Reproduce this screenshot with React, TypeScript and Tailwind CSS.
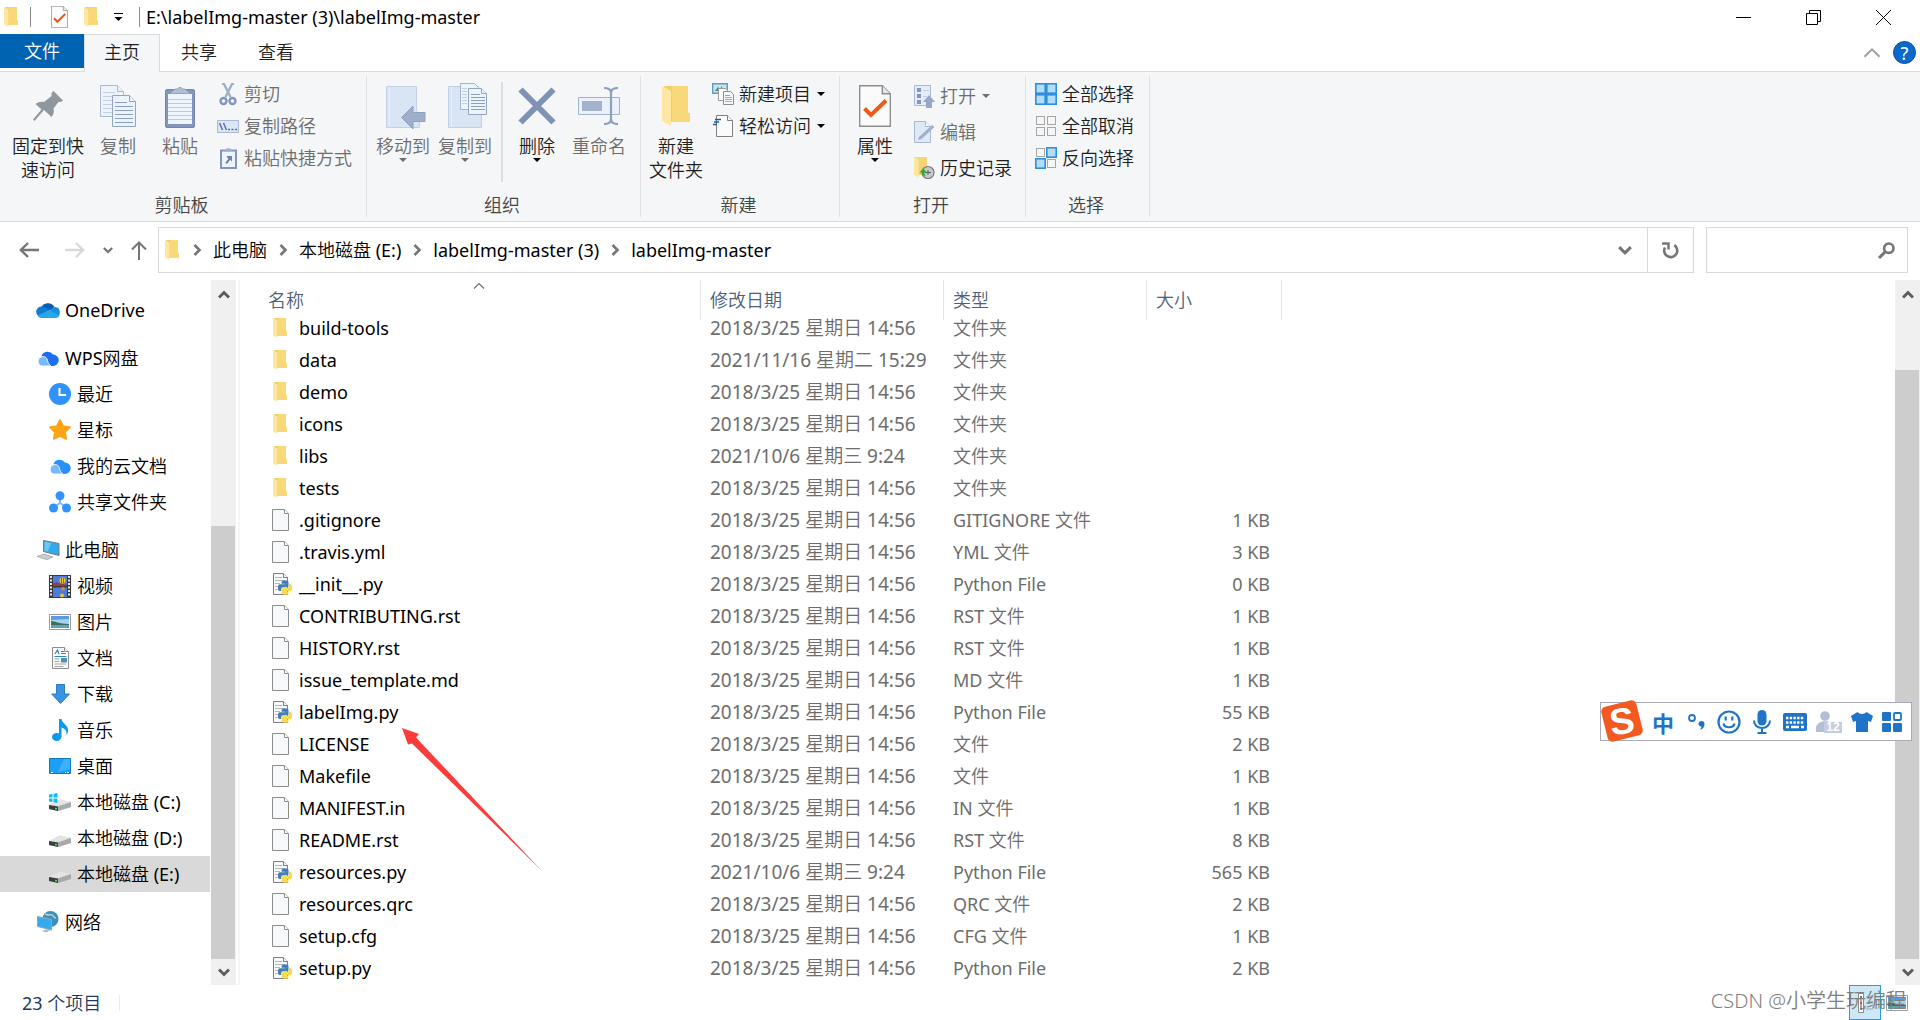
import { useState } from "react";
import type { ReactNode } from "react";
import clsx from "clsx";

type FileKind = "folder" | "file" | "python";

interface FileRow {
    name: string;
    kind: FileKind;
    date: string;
    type: string;
    size?: string;
}

const MARCH = "2018/3/25 星期日 14:56";
const OCTOBER = "2021/10/6 星期三 9:24";

const files: FileRow[] = [
    { name: "build-tools", kind: "folder", date: MARCH, type: "文件夹" },
    { name: "data", kind: "folder", date: "2021/11/16 星期二 15:29", type: "文件夹" },
    { name: "demo", kind: "folder", date: MARCH, type: "文件夹" },
    { name: "icons", kind: "folder", date: MARCH, type: "文件夹" },
    { name: "libs", kind: "folder", date: OCTOBER, type: "文件夹" },
    { name: "tests", kind: "folder", date: MARCH, type: "文件夹" },
    { name: ".gitignore", kind: "file", date: MARCH, type: "GITIGNORE 文件", size: "1 KB" },
    { name: ".travis.yml", kind: "file", date: MARCH, type: "YML 文件", size: "3 KB" },
    { name: "__init__.py", kind: "python", date: MARCH, type: "Python File", size: "0 KB" },
    { name: "CONTRIBUTING.rst", kind: "file", date: MARCH, type: "RST 文件", size: "1 KB" },
    { name: "HISTORY.rst", kind: "file", date: MARCH, type: "RST 文件", size: "1 KB" },
    { name: "issue_template.md", kind: "file", date: MARCH, type: "MD 文件", size: "1 KB" },
    { name: "labelImg.py", kind: "python", date: MARCH, type: "Python File", size: "55 KB" },
    { name: "LICENSE", kind: "file", date: MARCH, type: "文件", size: "2 KB" },
    { name: "Makefile", kind: "file", date: MARCH, type: "文件", size: "1 KB" },
    { name: "MANIFEST.in", kind: "file", date: MARCH, type: "IN 文件", size: "1 KB" },
    { name: "README.rst", kind: "file", date: MARCH, type: "RST 文件", size: "8 KB" },
    { name: "resources.py", kind: "python", date: OCTOBER, type: "Python File", size: "565 KB" },
    { name: "resources.qrc", kind: "file", date: MARCH, type: "QRC 文件", size: "2 KB" },
    { name: "setup.cfg", kind: "file", date: MARCH, type: "CFG 文件", size: "1 KB" },
    { name: "setup.py", kind: "python", date: MARCH, type: "Python File", size: "2 KB" },
];

/* ---------- file icons ---------- */

function FolderIcon({ className = "w-[14px] h-5" }: { className?: string }) {
    return (
        <svg viewBox="0 0 14 20" preserveAspectRatio="none" className={className}>
            <path d="M1 0h12v13.5h1V18H4z" fill="#f3cd6c" />
            <path d="M5 0h8v13.5h1V18H5z" fill="#f8d878" />
            <path d="M0 0l4.5 2.5V20L0 17.5z" fill="#ffe7a2" />
        </svg>
    );
}

function PageIcon() {
    return (
        <svg viewBox="0 0 17 22" className="w-[17px] h-[22px]">
            <path d="M.5.5h12l4 4v17H.5z" fill="#f8f9fa" stroke="#8c8c8c" />
            <path d="M12.5.5v4h4" fill="#fff" stroke="#8c8c8c" />
        </svg>
    );
}

function PythonIcon() {
    return (
        <svg viewBox="0 0 20 22" className="w-5 h-[22px]">
            <path d="M1.5.5h10l4 4v17h-14z" fill="#f8f9fa" stroke="#7d7d7d" />
            <path d="M11.5.5v4h4" fill="#fff" stroke="#7d7d7d" />
            <path d="M3 4.5h7M3 7.5h10M3 10.5h5M3 13.5h3M3 16.5h4" stroke="#b5b5b5" />
            <g transform="translate(6 7.5) scale(.59)">
                <path fill="#3d7fb8" d="M14.25.18l.9.2.73.26.59.3.45.32.34.34.25.34.16.33.1.3.04.26.02.2-.01.13V8.5l-.05.63-.13.55-.21.46-.26.38-.3.31-.33.25-.35.19-.35.14-.33.1-.3.07-.26.04-.21.02H8.77l-.69.05-.59.14-.5.22-.41.27-.33.32-.27.35-.2.36-.15.37-.1.35-.07.32-.04.27-.02.21v3.06H3.17l-.21-.03-.28-.07-.32-.12-.35-.18-.36-.26-.36-.36-.35-.46-.32-.59-.28-.73-.21-.88-.14-1.05-.05-1.23.06-1.22.16-1.04.24-.87.32-.71.36-.57.4-.44.42-.33.42-.24.4-.16.36-.1.32-.05.24-.01h.16l.06.01h8.16v-.83H6.18l-.01-2.75-.02-.37.05-.34.11-.31.17-.28.25-.26.31-.23.38-.2.44-.18.51-.15.58-.12.64-.1.71-.06.77-.04.84-.02 1.27.05z" />
                <path fill="#ffd84a" d="M21.1 6.11l.28.06.32.12.35.18.36.27.36.35.35.47.32.59.28.73.21.88.14 1.04.05 1.23-.06 1.23-.16 1.04-.24.86-.32.71-.36.57-.4.45-.42.33-.42.24-.4.16-.36.09-.32.05-.24.02-.16-.01h-8.22v.82h5.84l.01 2.76.02.36-.05.34-.11.31-.17.29-.25.25-.31.24-.38.2-.44.17-.51.15-.58.13-.64.09-.71.07-.77.04-.84.01-1.27-.04-1.07-.14-.9-.2-.73-.25-.59-.3-.45-.33-.34-.34-.25-.34-.16-.33-.1-.3-.04-.25-.02-.2.01-.13v-5.34l.05-.64.13-.54.21-.46.26-.38.3-.32.33-.24.35-.2.35-.14.33-.1.3-.06.26-.04.21-.02.13-.01h5.84l.69-.05.59-.14.5-.21.41-.28.33-.32.27-.35.2-.36.15-.36.1-.35.07-.32.04-.28.02-.21V6.07h2.09z" />
            </g>
        </svg>
    );
}

function CheckPageIcon({ className }: { className: string }) {
    return (
        <svg viewBox="0 0 32 42" className={className}>
            <path d="M.7.7h22.6l8 8v32.6H.7z" fill="#fbfbfb" stroke="#8e8e8e" strokeWidth="1.4" />
            <path d="M23.3.7v8h8" fill="#e6e6e6" stroke="#8e8e8e" strokeWidth="1.4" />
            <path d="M5.5 23.5l6.5 6.5L27 15.5" fill="none" stroke="#f1581a" strokeWidth="4" />
        </svg>
    );
}

const fileIcons: Record<FileKind, ReactNode> = {
    folder: <span className="pl-px"><FolderIcon /></span>,
    file: <PageIcon />,
    python: <PythonIcon />,
};

/* ---------- small glyphs ---------- */

function Caret({ muted = false }: { muted?: boolean }) {
    return (
        <svg viewBox="0 0 8 4" className="w-2 h-1">
            <path d="M0 0h8L4 4z" fill={muted ? "#6d6d6d" : "#000"} />
        </svg>
    );
}

function Chevron({ dir, className = "w-3 h-3", color = "#5d5d5d", weight = 2.6 }: { dir: "up" | "down" | "right"; className?: string; color?: string; weight?: number }) {
    const paths = { up: "M1 8.5L6 3.5l5 5", down: "M1 3.5l5 5 5-5", right: "M3.5 1l5 5-5 5" };
    return (
        <svg viewBox="0 0 12 12" className={className}>
            <path d={paths[dir]} fill="none" stroke={color} strokeWidth={weight} />
        </svg>
    );
}

/* ---------- ribbon icons ---------- */

const PinIcon = (
    <svg viewBox="0 0 30 30" className="w-[30px] h-[30px]">
        <path d="M20.5 0L30 9.500l-2.500 1.500-2 0-5 6.500c.8 3 .2 6-2 8.500L11 19 1.500 30 0 28.500 8.500 18.500 2.500 13c2.500-2 5.500-2.500 8.500-2L18.500 5V2z" fill="#8f989e" />
    </svg>
);

function SheetPair({ className }: { className: string }) {
    return (
        <svg viewBox="0 0 36 42" className={className}>
            <g fill="#edf3fb" stroke="#a9b9d3">
                <path d="M.5.500h17l6 6v25H.5z" />
                <path d="M17.500.500v6h6" />
                <path d="M12.500 10.500h17l6 6v25h-23z" stroke="#93a5c4" />
                <path d="M29.500 10.500v6h6" stroke="#93a5c4" />
            </g>
            <path d="M3 7.500h12M3 11.500h9M3 15.500h9M3 19.500h9M3 23.500h9M3 27.500h9" stroke="#c3cfe2" />
            <path d="M15 17.500h12M15 21.500h18M15 25.500h18M15 29.500h18M15 33.500h18M15 37.500h18" stroke="#8c9fc0" />
        </svg>
    );
}

const PasteIcon = (
    <svg viewBox="0 0 30 43" className="w-[30px] h-[43px]">
        <rect x=".5" y="4.500" width="29" height="38" rx="1.500" fill="#8395bb" stroke="#7386ae" />
        <path d="M3 9h24v30H3z" fill="#eef4fc" />
        <path d="M3 14.500h24M3 18.500h24M3 22.500h24M3 26.500h24M3 30.500h24M3 34.500h24" stroke="#bccbe2" />
        <path d="M5 8.500l5-4.500h2.500a2.800 2.800 0 015 0H20l5 4.500z" fill="#b1bfd6" stroke="#93a4c2" />
    </svg>
);

const CutIcon = (
    <svg viewBox="0 0 18 23" className="w-[18px] h-[23px]" fill="none">
        <path d="M3 .5l2 .5 6.500 13M15 .5l-2 .5-6.500 13" stroke="#9eafcb" strokeWidth="2.400" />
        <circle cx="4.500" cy="18" r="3" stroke="#8196bd" strokeWidth="2.400" />
        <circle cx="13.500" cy="18" r="3" stroke="#8196bd" strokeWidth="2.400" />
    </svg>
);

const CopyPathIcon = (
    <svg viewBox="0 0 22 13" className="w-[22px] h-[13px]">
        <path d="M.5.500h21v12H.5z" fill="#dce6f4" stroke="#a9b9d3" />
        <path d="M2.500 3l3 7M6.500 3l3 7M11 9.500h2M14.500 9.500h2M18 9.500h2" stroke="#5c709b" strokeWidth="1.500" />
    </svg>
);

const PasteLinkIcon = (
    <svg viewBox="0 0 17 22" className="w-[17px] h-[22px]">
        <rect x="1" y="3.500" width="15" height="17.500" fill="#edf3fb" stroke="#8395bb" strokeWidth="2" />
        <path d="M3.500 4.500l3-3h1a1.300 1.300 0 012 0h1l3 3z" fill="#a2b2ce" />
        <path d="M6.500 9H12v5.500l-1.800-1.700L7 17l-1.700-1.200 3-3.800z" fill="#6f83ac" />
    </svg>
);

function LightFolder({ children }: { children: ReactNode }) {
    return (
        <svg viewBox="0 0 42 46" className="ml-1.5 w-[42px] h-[46px]">
            <path d="M1.500 3.500h30v24l3 3v14h-33z" fill="#d9e4f4" stroke="#c1d0e6" />
            <path d="M4.500 4v40" stroke="#e8effa" />
            {children}
        </svg>
    );
}

const MoveIcon = (
    <LightFolder>
        <path d="M16.500 34.500L28 23v6.500h12v9H28V46z" fill="#9fafcb" stroke="#8fa1c2" />
    </LightFolder>
);

const CopyToIcon = (
    <LightFolder>
        <g fill="#edf3fb" stroke="#a3b4cf">
            <path d="M13.500.500h14l4 4v22h-18z" />
            <path d="M21.500 5.500h13l5 5v21h-18z" stroke="#93a5c4" />
            <path d="M34.500 5.500v5h5" stroke="#93a5c4" />
        </g>
        <path d="M15 5.500h5M15 8.500h5M15 11.500h5M15 14.500h5M15 17.500h5M15 20.500h5" stroke="#c3cfe2" />
        <path d="M24 11.500h9M24 14.500h14M24 17.500h14M24 20.500h14M24 23.500h14M24 26.500h14" stroke="#8c9fc0" />
    </LightFolder>
);

const DeleteIcon = (
    <svg viewBox="0 0 38 38" className="w-[38px] h-[38px]">
        <path d="M2.500 2.500l33 33M35.500 2.500l-33 33" stroke="#8092b3" strokeWidth="6" />
    </svg>
);

const RenameIcon = (
    <svg viewBox="0 0 42 38" className="w-[42px] h-[38px]" fill="none">
        <path d="M.5 10.500h41v17H.5z" fill="#eaf1fa" stroke="#a1b2cf" />
        <path d="M4 14h20v10H4z" fill="#a3b2cd" />
        <path d="M26 1c4 0 7 1.500 7 5v26c0 3.500-3 5-7 5M40 1c-4 0-7 1.500-7 5M40 37c-4 0-7-1.500-7-5" stroke="#8c9fc0" strokeWidth="2.200" />
    </svg>
);

const NewItemIcon = (
    <svg viewBox="0 0 22 22" className="w-[22px] h-[22px]">
        <path d="M.7.700h14.600v9.600H.700z" fill="#c4e4f4" stroke="#5e9fc0" strokeWidth="1.400" />
        <path d="M3 8l3-4 2 2 2-3v5z" fill="#4b7f95" />
        <path d="M6.500 5.500h7l2 2v10h-9z" fill="#fff" stroke="#9b9b9b" />
        <path d="M11.500 8.500h7l3 3v10h-10z" fill="#f4f8fd" stroke="#8e8e8e" />
        <path d="M13 12.500h5M13 16.500h7" stroke="#e08a84" />
        <path d="M13 14.500h7M13 18.500h7" stroke="#86b7e2" />
    </svg>
);

const EasyAccessIcon = (
    <svg viewBox="0 0 20 22" className="w-5 h-[22px]">
        <path d="M3.500.500h11l5 5v16h-16z" fill="#fbfbfb" stroke="#808080" />
        <path d="M14.500.500v5h5" fill="#fff" stroke="#808080" />
        <path d="M2 4.500h6M1 7h5M0 9.500h4" stroke="#1d5c9e" strokeWidth="1.300" />
    </svg>
);

const OpenIcon = (
    <svg viewBox="0 0 21 23" className="w-[21px] h-[23px]">
        <path d="M.5.500h16v20H.5z" fill="#e4ecf7" stroke="#a9b9d3" />
        <path d="M3 3h4v4H3zM3 9h4v4H3zM3 15h4v4H3z" fill="#8396bb" />
        <path d="M9 5.500h6M9 11.500h4" stroke="#c3cfe2" />
        <path d="M15 10l6 7h-3v6h-6v-6H9z" fill="#97a8c7" />
    </svg>
);

const EditIcon = (
    <svg viewBox="0 0 21 22" className="w-[21px] h-[22px]">
        <path d="M.5.500h11l5 5v16H.5z" fill="#dfe8f5" stroke="#a9b9d3" />
        <path d="M11.500.500v5h5" fill="#f3f7fc" stroke="#a9b9d3" />
        <path d="M4 19l1-3L18 4l2.500 2L7.500 18z" fill="#9fb0cd" />
    </svg>
);

const HistoryIcon = (
    <svg viewBox="0 0 21 22" className="w-[21px] h-[22px]">
        <path d="M0 0h13v18H4z" fill="#f6d374" />
        <path d="M0 0l4.500 2.500V21L0 18z" fill="#ffe7a2" />
        <circle cx="14" cy="15.500" r="6" fill="#c7cacb" stroke="#77797a" strokeWidth="1.200" />
        <path d="M11 15.500h6M14 13v5" stroke="#5d6061" />
        <path d="M5.500 15.500l3.500-4 3.500 3.500h-2c0 2 .5 3 1.500 4-3 0-4-1.500-4.300-3.500z" fill="#2fae34" />
    </svg>
);

function SelectIcon({ on }: { on: boolean[] }) {
    return (
        <svg viewBox="0 0 22 22" className="w-[22px] h-[22px]">
            {on.map((lit, i) => (
                <rect
                    key={i}
                    x={lit ? (i % 2) * 11 + 0.8 : (i % 2) * 11 + 1.5}
                    y={lit ? (i > 1 ? 11.8 : 0.8) : i > 1 ? 12.5 : 1.5}
                    width={lit ? 9.4 : 8}
                    height={lit ? 9.4 : 8}
                    fill={lit ? "#b4dcfb" : "#f6f6f6"}
                    stroke={lit ? "#2d8fe0" : "#a6a6a6"}
                    strokeWidth={lit ? 1.6 : 1}
                />
            ))}
        </svg>
    );
}

/* ---------- sidebar icons ---------- */

const OneDriveIcon = (
    <svg viewBox="0 0 24 16" className="w-6 h-4">
        <path d="M5 6a7.500 7.500 0 0113.500-1L12 10z" fill="#0a5cb0" />
        <path d="M6 4.500c3 0 5 1.500 8 3.500L5 15a5.200 5.200 0 011-10.500z" fill="#1079d3" />
        <path d="M14 8c3-3.500 6-3.500 7-2.500 3 .5 3.500 6 2 8l-6-1z" fill="#1490df" />
        <path d="M1.500 13.500L13.500 8l10 5.500c-1 1.700-2 2.500-4 2.500H5c-1.500 0-2.800-1-3.500-2.500z" fill="#28a8ea" />
    </svg>
);

function CloudIcon({ deep = false }: { deep?: boolean }) {
    return (
        <svg viewBox="0 0 22 16" className="w-[22px] h-4">
            <path d="M4.500 6A6.500 6.500 0 0116 4.500a5.700 5.700 0 010 11.500h-4z" fill={deep ? "#1d6ff2" : "#2a90fa"} />
            <path d="M5.500 6.500a5 5 0 015 4c.5 2.500 1.500 4 3.500 5.500H5A4.800 4.800 0 015.500 6.500z" fill="#78b8fd" stroke="#fff" strokeWidth=".9" />
        </svg>
    );
}

const RecentIcon = (
    <svg viewBox="0 0 22 22" className="w-[22px] h-[22px]">
        <circle cx="11" cy="11" r="11" fill="#2f93fb" />
        <path d="M10.500 5v7H17" fill="none" stroke="#fff" strokeWidth="2" />
    </svg>
);

const StarIcon = (
    <svg viewBox="0 0 22 22" className="w-[22px] h-[22px]">
        <path d="M11 1.200l3 6 6.800 1-4.900 4.800 1.200 6.800L11 16.800l-6.100 3 1.200-6.800L1.200 8.200l6.800-1z" fill="#fba617" stroke="#fba617" strokeWidth="2" strokeLinejoin="round" />
    </svg>
);

const ShareIcon = (
    <svg viewBox="0 0 22 22" className="w-[22px] h-[22px]">
        <path d="M11 6v6M11 12l-6 4M11 12l6 4" stroke="#7dbafc" strokeWidth="2" />
        <circle cx="11" cy="4.800" r="4.500" fill="#2f93fb" />
        <circle cx="4.500" cy="17" r="4.500" fill="#2f93fb" />
        <circle cx="17.500" cy="17" r="4.500" fill="#2f93fb" />
    </svg>
);

const PcIcon = (
    <svg viewBox="0 0 24 20" className="w-6 h-5">
        <path d="M7.500.500l15.500 3v12L7.500 11.500z" fill="#34a9ec" stroke="#6b7c88" />
        <path d="M8.500 1.700l7 1.300-4 8.500-3-.8z" fill="#6cc5f5" />
        <path d="M1 16.500l7-2.500 9 3-6 2.800z" fill="#c9ccd0" stroke="#9ea3a8" strokeWidth=".7" />
    </svg>
);

const VideoIcon = (
    <svg viewBox="0 0 22 23" className="w-[22px] h-[23px]">
        <path d="M0 0h22v23H0z" fill="#3a3a3a" />
        <path d="M4 1h14v10H4zM4 12.500h14V22H4z" fill="#4f7cdb" />
        <path d="M4 8.500l4-1.500 2 1.500 8 1V11H4z" fill="#8d3f4a" />
        <circle cx="13.500" cy="5.500" r="3" fill="#f0c22e" />
        <path d="M12.500 3v5M14.500 3v5" stroke="#d2402a" />
        <circle cx="14" cy="13.800" r="1.800" fill="#e5862a" />
        <circle cx="13" cy="20.500" r="2" fill="#f0c22e" />
        <path d="M2 1v21M20 1v21" stroke="#e8e8e8" strokeWidth="2" strokeDasharray="2 1.500" />
    </svg>
);

function PictureIcon() {
    return (
        <svg viewBox="0 0 22 16" className="w-[22px] h-4">
            <path d="M.5.500h21v15H.5z" fill="#fff" stroke="#9a9a9a" />
            <path d="M2 2h18v12H2z" fill="#a3d3f3" />
            <path d="M2 2h18v3l-18 1z" fill="#5d9be0" />
            <path d="M2 7c4 0 8 3 18 3v1.500H2z" fill="#3f6d58" />
            <path d="M2 11.500h18V14H2z" fill="#5ea3c4" />
        </svg>
    );
}

const DocumentIcon = (
    <svg viewBox="0 0 17 22" className="w-[17px] h-[22px]">
        <path d="M.5.500h12l4 4v17H.5z" fill="#fbfbfb" stroke="#8c8c8c" />
        <path d="M12.500.500v4h4" fill="#fff" stroke="#8c8c8c" />
        <path d="M3 7l2.500-4L7 7M9 4.500h3M9 6.500h5M2.500 9.500h12" stroke="#2a87c8" fill="none" strokeWidth="1.200" />
        <path d="M2.500 12h5M2.500 14.500h5M2.500 17h12M2.500 19.500h9" stroke="#a5a5a5" />
        <path d="M9 11h6v4.500H9z" fill="#4f8fb8" />
    </svg>
);

const DownloadIcon = (
    <svg viewBox="0 0 19 20" className="w-[19px] h-5">
        <path d="M5.500.500h8v9.500h5L9.500 19.500.700 10h4.800z" fill="#3a92e2" stroke="#2a7cc6" />
    </svg>
);

const MusicIcon = (
    <svg viewBox="0 0 16 22" className="w-4 h-[22px]">
        <ellipse cx="4.700" cy="18" rx="4.700" ry="4" fill="#0d99e8" />
        <path d="M7 0h2.500c.5 4 6.500 6 6.500 11 0 2-.5 3.500-1.500 5 .3-5-2-6.500-5-7.500V18H7z" fill="#0d99e8" />
    </svg>
);

const DesktopIcon = (
    <svg viewBox="0 0 22 16" className="w-[22px] h-4">
        <path d="M.5.500h21v15H.5z" fill="#1ba0f8" stroke="#0f78c2" />
        <path d="M15 1h6v10L9 14z" fill="#3eb0fb" />
        <path d="M2 14.500h2M16 14.500h1M18 14.500h2" stroke="#fff" />
    </svg>
);

function DriveIcon({ system = false }: { system?: boolean }) {
    return (
        <svg viewBox="0 0 22 18" className="w-[22px] h-[18px]">
            <path d="M0 12l11-5.500L22 9v5l-13 4-9-2z" fill="#d4d4d6" />
            <path d="M0 12l11-5.500L22 9 9 13z" fill="#e4e4e6" />
            <path d="M0 12l9 1.500V18l-9-2z" fill="#3d3d3d" />
            <path d="M6 15.500l2 .3" stroke="#4be06a" strokeWidth="1.500" />
            <path d="M9 13.500L22 9v5L9 18z" fill="#a9a9ab" />
            {system && <path d="M0 1.500l3.500-.5v3.500H0zM4.500.800L8.500 0v4.500h-4zM0 5.500h3.500V9L0 8.500zM4.500 5.500h4V10l-4-.8z" fill="#10bdf2" />}
        </svg>
    );
}

const NetworkIcon = (
    <svg viewBox="0 0 22 22" className="w-[22px] h-[22px]">
        <circle cx="13.500" cy="8" r="8" fill="#3f8fb8" />
        <path d="M8 3c3 2 5 0 7 1s2 3 4 3" stroke="#a8d0e0" strokeWidth="1.600" fill="none" />
        <path d="M.5 5.500l14 3v10.500L.5 15.500z" fill="#35abee" stroke="#8aa9b8" />
        <path d="M5 20l5-2 3 1.500L9 21.500z" fill="#b5b9bd" />
    </svg>
);

/* ---------- ribbon ---------- */

interface ButtonProps {
    icon: ReactNode;
    label: string;
    muted?: boolean;
    caret?: boolean;
}

function BigButton({ icon, label, muted, caret, className }: ButtonProps & { className: string }) {
    return (
        <button className={clsx("flex shrink-0 flex-col items-center pt-[11px]", muted ? "text-[#6d6d6d]" : "text-[#1e1e1e]", className)}>
            <span className="flex h-[46px] items-center justify-center">{icon}</span>
            <span className="mt-[5px] whitespace-pre-line text-center leading-6">{label}</span>
            {caret && <Caret muted={muted} />}
        </button>
    );
}

function SmallButton({ icon, label, muted, caret, tall }: ButtonProps & { tall?: boolean }) {
    return (
        <button className={clsx("flex items-center whitespace-nowrap", tall ? "h-9" : "h-8", muted ? "text-[#6d6d6d]" : "text-[#1e1e1e]")}>
            <span className="mr-1 flex w-6 justify-center">{icon}</span>
            {label}
            {caret && <span className="flex pl-1.5"><Caret muted={muted} /></span>}
        </button>
    );
}

function RibbonGroup({ title, className, children }: { title: string; className: string; children: ReactNode }) {
    return (
        <section className={clsx("relative flex h-full shrink-0 flex-col", className)}>
            <div className="flex flex-1">{children}</div>
            <h2 className="h-8 pr-1 text-center leading-8 text-[#444]">{title}</h2>
            <span className="absolute right-0 top-1 bottom-1 w-px bg-[#dfe1e3]" />
        </section>
    );
}

function Ribbon() {
    return (
        <div className="flex h-[150px] overflow-hidden border-b border-[#dadbdc] bg-[#f4f6f8]">
            <RibbonGroup title="剪贴板" className="w-[367px]">
                <BigButton className="ml-2 w-20" icon={PinIcon} label={"固定到快\n速访问"} />
                <BigButton className="w-[60px]" icon={<SheetPair className="w-9 h-[42px]" />} label="复制" muted />
                <BigButton className="w-16" icon={PasteIcon} label="粘贴" muted />
                <div className="ml-1 pt-1.5">
                    <SmallButton icon={CutIcon} label="剪切" muted />
                    <SmallButton icon={CopyPathIcon} label="复制路径" muted />
                    <SmallButton icon={PasteLinkIcon} label="粘贴快捷方式" muted />
                </div>
            </RibbonGroup>
            <RibbonGroup title="组织" className="w-[274px]">
                <BigButton className="ml-1 w-16" icon={MoveIcon} label="移动到" muted caret />
                <BigButton className="w-[60px]" icon={CopyToIcon} label="复制到" muted caret />
                <span className="mx-1.5 mt-2.5 h-[100px] w-0.5 bg-[#dcdee0]" />
                <BigButton className="w-14" icon={DeleteIcon} label="删除" caret />
                <BigButton className="ml-1 w-[60px]" icon={RenameIcon} label="重命名" muted />
            </RibbonGroup>
            <RibbonGroup title="新建" className="w-[199px]">
                <BigButton className="ml-1 w-[62px]" icon={<FolderIcon className="w-7 h-10" />} label={"新建\n文件夹"} />
                <div className="ml-1 pt-1.5">
                    <SmallButton icon={NewItemIcon} label="新建项目" caret />
                    <SmallButton icon={EasyAccessIcon} label="轻松访问" caret />
                </div>
            </RibbonGroup>
            <RibbonGroup title="打开" className="w-[186px]">
                <BigButton className="ml-1 w-[62px]" icon={<CheckPageIcon className="w-8 h-[42px]" />} label="属性" caret />
                <div className="ml-1.5 pt-1.5">
                    <SmallButton icon={OpenIcon} label="打开" muted caret tall />
                    <SmallButton icon={EditIcon} label="编辑" muted tall />
                    <SmallButton icon={HistoryIcon} label="历史记录" tall />
                </div>
            </RibbonGroup>
            <RibbonGroup title="选择" className="w-[124px]">
                <div className="ml-2 pt-1.5">
                    <SmallButton icon={<SelectIcon on={[true, true, true, true]} />} label="全部选择" />
                    <SmallButton icon={<SelectIcon on={[false, false, false, false]} />} label="全部取消" />
                    <SmallButton icon={<SelectIcon on={[false, true, true, false]} />} label="反向选择" />
                </div>
            </RibbonGroup>
        </div>
    );
}

/* ---------- window chrome ---------- */

function TitleBar() {
    return (
        <header className="flex h-[34px] items-center pl-1 pr-0.5">
            <FolderIcon />
            <span className="ml-3 h-5 w-px bg-[#8c8c8c]" />
            <CheckPageIcon className="ml-5 w-[17px] h-[22px]" />
            <span className="ml-4 flex"><FolderIcon /></span>
            <button aria-label="自定义快速访问工具栏" className="ml-4">
                <svg viewBox="0 0 9 8" className="w-[9px] h-2">
                    <path d="M0 .5h9" stroke="#000" />
                    <path d="M.5 4h8l-4 4z" fill="#000" />
                </svg>
            </button>
            <span className="ml-4 h-5 w-px bg-[#8c8c8c]" />
            <h1 className="ml-1.5 flex-1 text-black">E:\labelImg-master (3)\labelImg-master</h1>
            <button aria-label="最小化" className="flex h-full w-[70px] items-center justify-center">
                <svg viewBox="0 0 15 15" className="w-[15px] h-[15px]"><path d="M0 7.500h15" stroke="#000" /></svg>
            </button>
            <button aria-label="向下还原" className="flex h-full w-[70px] items-center justify-center">
                <svg viewBox="0 0 15 15" className="w-[15px] h-[15px]" fill="none" stroke="#000">
                    <path d="M.5 3.500h11v11H.5zM3.500 3.500v-3h11v11h-3" />
                </svg>
            </button>
            <button aria-label="关闭" className="flex h-full w-[70px] items-center justify-center">
                <svg viewBox="0 0 15 15" className="w-[15px] h-[15px]"><path d="M0 0l15 15M15 0L0 15" stroke="#000" /></svg>
            </button>
        </header>
    );
}

function Tabs() {
    return (
        <nav className="relative flex h-[38px] border-b border-[#dadbdc] text-[#1e1e1e]">
            <button className="h-[34px] w-[84px] bg-[#0063b1] text-white">文件</button>
            <button className="-mb-px w-[76px] border border-b-0 border-[#dadbdc] bg-[#f4f6f8] pb-1">主页</button>
            <button className="w-[78px] pb-0.5">共享</button>
            <button className="w-[76px] pb-0.5">查看</button>
            <div className="ml-auto flex items-center gap-3 pr-1">
                <button aria-label="最小化功能区"><Chevron dir="up" className="w-[18px] h-[18px]" color="#9d9d9d" weight={1.2} /></button>
                <button aria-label="帮助" className="flex h-[23px] w-[23px] items-center justify-center rounded-full border border-[#0b4f94] bg-[#0a6acb] text-lg leading-5 text-white">?</button>
            </div>
        </nav>
    );
}

function AddressBar() {
    const [query, setQuery] = useState("");
    const crumbs = ["此电脑", "本地磁盘 (E:)", "labelImg-master (3)", "labelImg-master"];
    return (
        <div className="flex items-center px-3 pt-[5px]">
            <div className="flex w-[146px] items-center pl-[7px]">
                <button aria-label="返回">
                    <svg viewBox="0 0 20 16" className="w-5 h-4" fill="none" stroke="#757575" strokeWidth="2.400"><path d="M1.500 8H20M9 1L1.800 8 9 15" /></svg>
                </button>
                <button aria-label="前进" className="ml-[26px]">
                    <svg viewBox="0 0 20 16" className="w-5 h-4" fill="none" stroke="#d9d9d9" strokeWidth="2.400"><path d="M0 8h18.500M11 1l7.200 7-7.200 7" /></svg>
                </button>
                <button aria-label="最近浏览的位置" className="ml-[18px]"><Chevron dir="down" className="w-2.5 h-2.5" color="#757575" /></button>
                <button aria-label="上移" className="ml-[18px]">
                    <svg viewBox="0 0 16 19" className="w-4 h-[19px]" fill="none" stroke="#757575" strokeWidth="2"><path d="M8 1.500V19M1 8.500l7-7 7 7" /></svg>
                </button>
            </div>
            <div className="flex h-[46px] min-w-0 flex-1 items-center border border-[#d9d9d9] pl-1.5">
                <span className="mr-0.5"><FolderIcon /></span>
                {crumbs.map((crumb) => (
                    <span key={crumb} className="flex items-center gap-2.5 pl-2.5">
                        <Chevron dir="right" color="#757575" />
                        <button className="whitespace-nowrap text-black">{crumb}</button>
                    </span>
                ))}
                <button aria-label="以前的位置" className="ml-auto mr-[15px]"><Chevron dir="down" className="w-3.5 h-3.5" color="#757575" /></button>
                <button aria-label="刷新" className="flex h-full w-[46px] items-center justify-center border-l border-[#d9d9d9]">
                    <svg viewBox="0 0 17 17" className="w-[17px] h-[17px]" fill="none">
                        <path d="M12.300 3.200A6.500 6.500 0 113 5.500" stroke="#757575" strokeWidth="2.600" />
                        <path d="M0 1.500h6.500v6" stroke="#757575" strokeWidth="2.400" />
                    </svg>
                </button>
            </div>
            <label className="ml-3 flex h-[46px] w-[202px] items-center border border-[#d9d9d9] pr-3">
                <input
                    type="search"
                    aria-label="搜索"
                    value={query}
                    onChange={(e) => setQuery(e.target.value)}
                    className="h-full min-w-0 flex-1 pl-2 outline-none"
                />
                <svg viewBox="0 0 17 17" className="w-[17px] h-[17px]" fill="none" stroke="#757575">
                    <circle cx="10.800" cy="6.200" r="4.700" strokeWidth="2.600" />
                    <path d="M7.500 9.500L1 16" strokeWidth="3" />
                </svg>
            </label>
        </div>
    );
}

/* `spacer` is the height of the free track above the thumb */
function Scrollbar({ spacer }: { spacer: string }) {
    return (
        <div className="flex w-[25px] shrink-0 flex-col bg-[#f0f0f0]">
            <button aria-label="向上滚动" className="flex h-[26px] items-center justify-center pt-1"><Chevron dir="up" weight={3} /></button>
            <div className={clsx("shrink-0", spacer)} />
            <div className="mr-px flex-1 bg-[#cdcdcd]" />
            <button aria-label="向下滚动" className="flex h-[26px] items-center justify-center"><Chevron dir="down" weight={3} /></button>
        </div>
    );
}

/* ---------- sidebar ---------- */

interface NavItem {
    label: string;
    icon: ReactNode;
    active?: boolean;
}

interface NavSection extends NavItem {
    items?: NavItem[];
}

const sections: NavSection[] = [
    { label: "OneDrive", icon: OneDriveIcon },
    {
        label: "WPS网盘",
        icon: <CloudIcon deep />,
        items: [
            { label: "最近", icon: RecentIcon },
            { label: "星标", icon: StarIcon },
            { label: "我的云文档", icon: <CloudIcon /> },
            { label: "共享文件夹", icon: ShareIcon },
        ],
    },
    {
        label: "此电脑",
        icon: PcIcon,
        items: [
            { label: "视频", icon: VideoIcon },
            { label: "图片", icon: <PictureIcon /> },
            { label: "文档", icon: DocumentIcon },
            { label: "下载", icon: DownloadIcon },
            { label: "音乐", icon: MusicIcon },
            { label: "桌面", icon: DesktopIcon },
            { label: "本地磁盘 (C:)", icon: <DriveIcon system /> },
            { label: "本地磁盘 (D:)", icon: <DriveIcon /> },
            { label: "本地磁盘 (E:)", icon: <DriveIcon />, active: true },
        ],
    },
    { label: "网络", icon: NetworkIcon },
];

function NavLink({ item, nested }: { item: NavItem; nested?: boolean }) {
    return (
        <a
            href="#"
            className={clsx("flex h-9 items-center gap-[5px] whitespace-nowrap text-black", nested ? "pl-12" : "pl-9", item.active && "bg-[#d9d9d9]")}
        >
            <span className="flex w-6 justify-center">{item.icon}</span>
            {item.label}
        </a>
    );
}

function Sidebar() {
    return (
        <aside className="flex w-60 shrink-0 border-r-2 border-[#f5f5f5]">
            <nav className="mr-px flex flex-1 flex-col gap-3 pt-3">
                {sections.map((section) => (
                    <div key={section.label}>
                        <NavLink item={section} />
                        {section.items?.map((item) => <NavLink key={item.label} item={item} nested />)}
                    </div>
                ))}
            </nav>
            <div className="mr-0.5 flex">
                <Scrollbar spacer="h-[220px]" />
            </div>
        </aside>
    );
}

/* ---------- file table ---------- */

function HeaderCell({ label, className }: { label: string; className?: string }) {
    return (
        <th scope="col" className={clsx("relative h-8 pt-2 text-left align-top font-normal leading-6 text-[#4c607a]", className)}>
            {label}
            <span className="absolute right-0 top-0 h-10 w-px bg-[#e5e5e5]" />
        </th>
    );
}

function FileTable() {
    return (
        <div className="relative min-w-0 flex-1 overflow-hidden">
            <table className="table-fixed border-collapse">
                <colgroup>
                    <col className="w-[461px]" />
                    <col className="w-[243px]" />
                    <col className="w-[203px]" />
                    <col className="w-[135px]" />
                </colgroup>
                <thead>
                    <tr>
                        <HeaderCell label="名称" className="pl-7" />
                        <HeaderCell label="修改日期" className="pl-[9px]" />
                        <HeaderCell label="类型" className="pl-[9px]" />
                        <HeaderCell label="大小" className="pl-[9px]" />
                    </tr>
                </thead>
                <tbody>
                    {files.map((file) => (
                        <tr key={file.name} className="h-8 whitespace-nowrap text-[#6d6d6d]">
                            <td className="p-0 pl-8 text-black">
                                <a href="#" className="flex h-8 items-center">
                                    <span className="flex w-[27px]">{fileIcons[file.kind]}</span>
                                    {file.name}
                                </a>
                            </td>
                            <td className="p-0 pl-[9px] text-[19px]">{file.date}</td>
                            <td className="p-0 pl-[9px]">{file.type}</td>
                            <td className="p-0 pr-3 text-right">{file.size}</td>
                        </tr>
                    ))}
                </tbody>
            </table>
            {/* sort direction mark over the name column */}
            <span className="absolute left-[233px] top-0 flex"><Chevron dir="up" color="#6d6d6d" weight={1.2} /></span>
            {/* annotation arrow pointing at labelImg.py */}
            <svg viewBox="0 0 142 144" className="absolute left-[161px] top-[448px] w-[142px] h-36">
                <path d="M1 0l17 6-3 3.500L141 143 11 15.500 7 16.500z" fill="#fc3b3b" />
            </svg>
        </div>
    );
}

/* ---------- floating input method bar ---------- */

function ImeBar() {
    return (
        <div className="absolute right-2 top-[702px] flex h-[39px] items-center gap-[9px] border border-[#a9a9b8] bg-white pl-[46px] pr-[9px] text-[#1f74c8]">
            <svg viewBox="0 0 44 44" className="absolute -left-px -top-1 w-11 h-11">
                <rect x="4" y="4" width="36" height="36" rx="5" transform="rotate(-14 22 22)" fill="#f4591f" />
                <text x="22" y="35" textAnchor="middle" transform="rotate(-8 22 22)" fontFamily="Liberation Sans, sans-serif" fontSize="37" fontWeight="700" fill="#fff">S</text>
            </svg>
            <button className="ml-1 w-6 text-[22px] font-bold leading-6 font-['Noto_Sans_CJK_SC',sans-serif]">中</button>
            <button aria-label="标点" className="w-6">
                <svg viewBox="0 0 24 24" className="w-6 h-6">
                    <circle cx="8" cy="8" r="3" fill="none" stroke="currentColor" strokeWidth="1.800" />
                    <path d="M14.500 14a3 3 0 116 0c0 3-1.500 5-4.500 6 1-1.500 1.500-2.500 1.300-3.500-1.600 0-2.800-1-2.800-2.500z" fill="currentColor" />
                </svg>
            </button>
            <button aria-label="表情">
                <svg viewBox="0 0 24 24" className="w-6 h-6" fill="none" stroke="currentColor" strokeWidth="2.200">
                    <circle cx="12" cy="12" r="10.500" />
                    <path d="M6.500 13.500c1 5 10 5 11 0M8.700 6.500v4M15.300 6.500v4" />
                </svg>
            </button>
            <button aria-label="语音">
                <svg viewBox="0 0 24 24" className="w-6 h-6">
                    <rect x="7.500" y="0" width="9" height="15.500" rx="4.500" fill="currentColor" />
                    <path d="M4 10.500c0 10 16 10 16 0M12 18v5M7.500 23h9" fill="none" stroke="currentColor" strokeWidth="2" />
                </svg>
            </button>
            <button aria-label="软键盘">
                <svg viewBox="0 0 24 18" className="w-6 h-[18px]">
                    <rect width="24" height="18" rx="2" fill="currentColor" />
                    <path d="M3 5h18M3 9.500h18" stroke="#fff" strokeWidth="2.600" strokeDasharray="2.400 1.300" />
                    <path d="M3 14h3M8 14h8M18 14h3" stroke="#fff" strokeWidth="2.400" />
                </svg>
            </button>
            <button aria-label="登录">
                <svg viewBox="0 0 26 26" className="w-[26px] h-[26px]">
                    <circle cx="9" cy="7" r="4.800" fill="#b4bfd6" />
                    <path d="M0 19c0-9 18-9 18 0v4H0z" fill="#b4bfd6" />
                    <path d="M8 13h18v11H8z" fill="#c3cce0" />
                    <text x="17" y="22" textAnchor="middle" fontFamily="Liberation Sans, sans-serif" fontSize="12" fontWeight="700" fill="#fff">12</text>
                </svg>
            </button>
            <button aria-label="皮肤">
                <svg viewBox="0 0 22 22" className="w-[22px] h-[22px]">
                    <path d="M6.500 1c2 2.500 7 2.500 9 0L22 5l-2 6-3-1v11H5V10l-3 1-2-6z" fill="currentColor" />
                </svg>
            </button>
            <button aria-label="工具箱">
                <svg viewBox="0 0 20 20" className="w-5 h-5" fill="currentColor">
                    <rect width="9" height="9" rx="1" />
                    <rect x="12" y="1" width="7" height="7" rx="1" fill="none" stroke="currentColor" strokeWidth="1.800" />
                    <rect y="11" width="9" height="9" rx="1" />
                    <rect x="11" y="11" width="9" height="9" rx="1" />
                </svg>
            </button>
        </div>
    );
}

function StatusBar() {
    return (
        <footer className="relative flex h-[35px] items-center pl-[22px] pr-3 text-[#1e395b]">
            <span>23 个项目</span>
            <span className="ml-[18px] h-4 w-px bg-[#ececec]" />
            <button aria-label="详细信息" className="ml-auto flex h-[35px] w-8 items-center justify-center border border-[#26a0da] bg-[#cce8f6]">
                <svg viewBox="0 0 20 20" className="w-5 h-5">
                    <path d="M3.500.500h5v19h-5z" fill="#fff" stroke="#8c8c8c" />
                    <path d="M5 4h2M5 16h2" stroke="#777" strokeWidth="2" />
                    <path d="M5 10h2" stroke="#d33" strokeWidth="2" />
                    <path d="M11 4h7M11 10h7M11 16h7" stroke="#9aa9b3" />
                </svg>
            </button>
            <button aria-label="大图标" className="ml-[5px]"><PictureIcon /></button>
            <span className="pointer-events-none absolute right-3.5 top-0 whitespace-nowrap text-xl font-light leading-8 text-[#808080]">
                CSDN @小学生玩编程
            </span>
        </footer>
    );
}

export default function App() {
    return (
        <div className="relative flex min-h-screen flex-col overflow-hidden bg-white font-['Noto_Sans','Noto_Sans_CJK_SC_DemiLight','Noto_Sans_CJK_SC_Light','Noto_Sans_CJK_SC',sans-serif] text-lg leading-6">
            <TitleBar />
            <Tabs />
            <Ribbon />
            <AddressBar />
            <main className="mt-[7px] flex flex-1">
                <Sidebar />
                <FileTable />
                <Scrollbar spacer="h-16" />
            </main>
            <StatusBar />
            <ImeBar />
        </div>
    );
}
